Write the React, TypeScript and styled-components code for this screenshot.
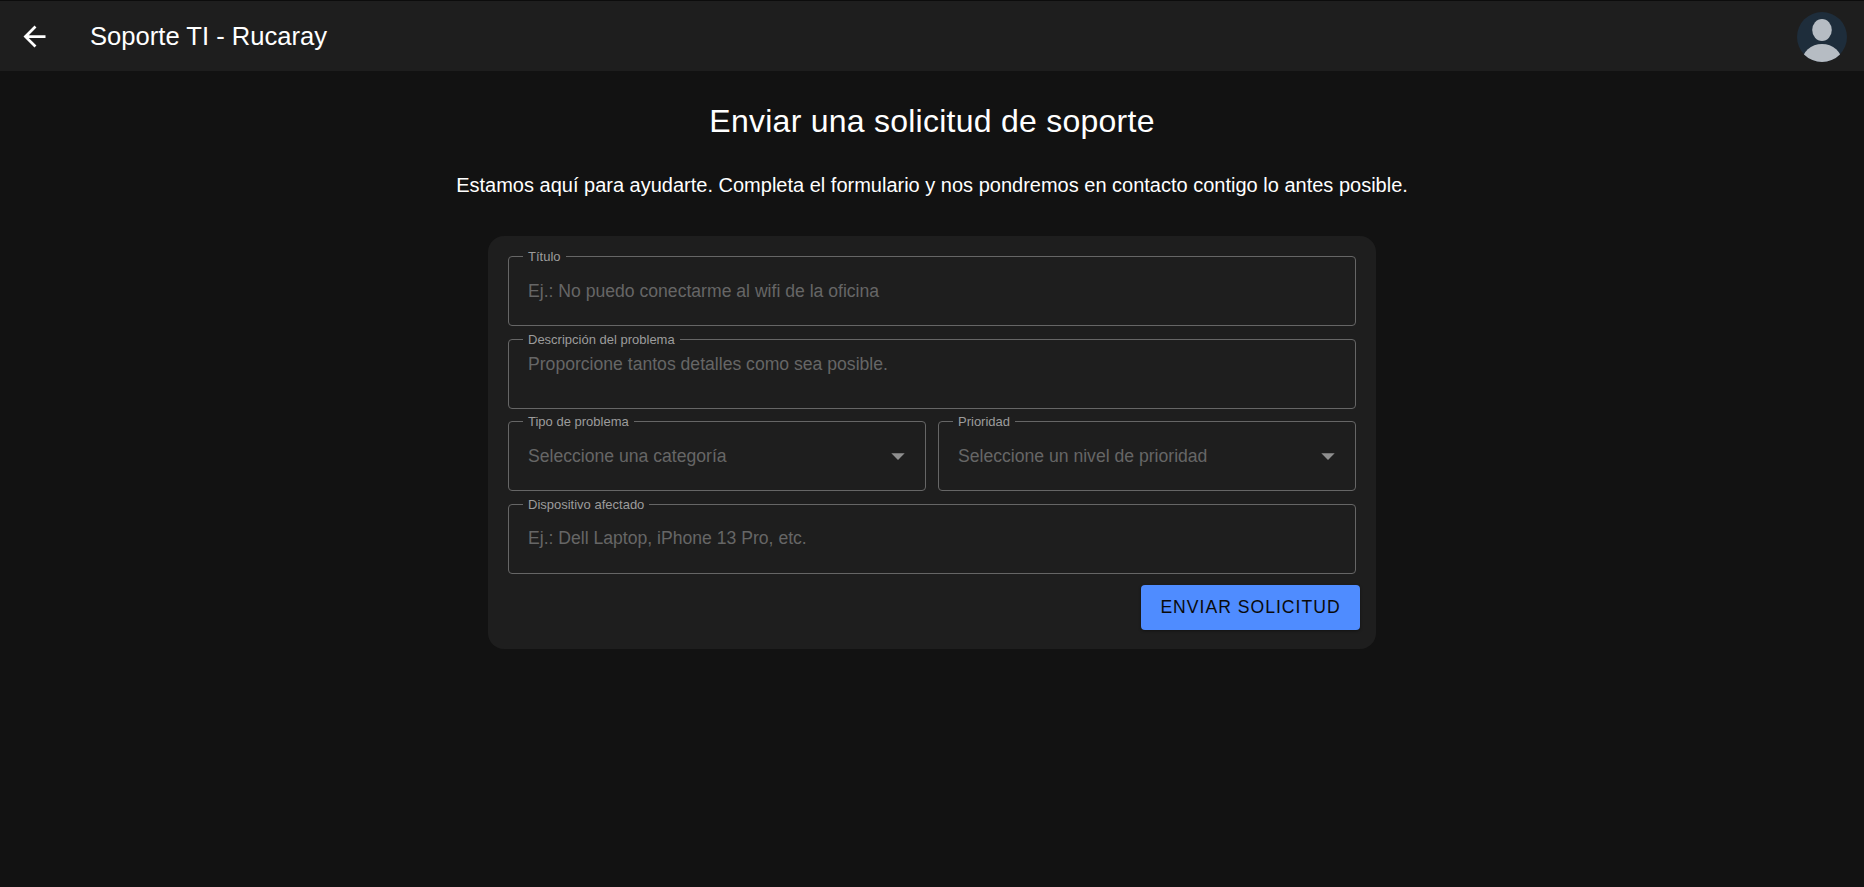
import React from 'react';
import styled, { createGlobalStyle } from 'styled-components';

const GlobalStyle = createGlobalStyle`
  html, body {
    margin: 0;
    padding: 0;
    background: #121212;
    font-family: "Liberation Sans", Arial, sans-serif;
  }
  * { box-sizing: border-box; }
`;

export default function App() {
  return (
    <Page>
      <GlobalStyle />
      <AppBar>
        <BackButton aria-label="Volver">
          <svg width="33" height="33" viewBox="0 0 24 24" fill="currentColor">
            <path d="M20 11H7.83l5.59-5.59L12 4l-8 8 8 8 1.41-1.41L7.83 13H20v-2z" />
          </svg>
        </BackButton>
        <AppTitle>Soporte TI - Rucaray</AppTitle>
        <Avatar>
          <svg width="50" height="50" viewBox="0 0 50 50">
            <ellipse cx="25" cy="18" rx="9.8" ry="11" fill="#b6bcc3" />
            <ellipse cx="25" cy="50" rx="20" ry="18" fill="#b6bcc3" />
          </svg>
        </Avatar>
      </AppBar>
      <Main>
        <Heading>Enviar una solicitud de soporte</Heading>
        <Intro>
          Estamos aquí para ayudarte. Completa el formulario y nos pondremos en
          contacto contigo lo antes posible.
        </Intro>
        <Card>
          <Field label="Título">
            <TextInput placeholder="Ej.: No puedo conectarme al wifi de la oficina" />
          </Field>
          <Field label="Descripción del problema">
            <TextArea placeholder="Proporcione tantos detalles como sea posible." />
          </Field>
          <Row>
            <Field label="Tipo de problema">
              <SelectValue>
                Seleccione una categoría
                <Caret />
              </SelectValue>
            </Field>
            <Field label="Prioridad">
              <SelectValue>
                Seleccione un nivel de prioridad
                <Caret />
              </SelectValue>
            </Field>
          </Row>
          <Field label="Dispositivo afectado">
            <TextInput placeholder="Ej.: Dell Laptop, iPhone 13 Pro, etc." />
          </Field>
          <Actions>
            <SubmitButton type="button">Enviar solicitud</SubmitButton>
          </Actions>
        </Card>
      </Main>
    </Page>
  );
}

function Field({ label, children }: { label: string; children: React.ReactNode }) {
  return (
    <FieldBox>
      <FieldLegend>{label}</FieldLegend>
      {children}
    </FieldBox>
  );
}

function Caret() {
  return (
    <CaretIcon width="32" height="32" viewBox="0 0 24 24" fill="currentColor">
      <path d="M7 10l5 5 5-5z" />
    </CaretIcon>
  );
}

const Page = styled.div`
  min-height: 887px;
  background: #121212;
  color: #fff;
`;

const AppBar = styled.header`
  display: flex;
  align-items: center;
  height: 71px;
  padding: 1px 17px 0 18px;
  background: #1e1e1e;
  border-top: 1px solid #0c0c0c;
`;

const BackButton = styled.button`
  display: flex;
  border: 0;
  padding: 0;
  background: none;
  color: #fff;
`;

const AppTitle = styled.h1`
  margin: 0 0 0 39px;
  font-size: 25.6px;
  font-weight: 400;
  line-height: 1.2;
`;

const Avatar = styled.div`
  width: 50px;
  height: 50px;
  margin-left: auto;
  border-radius: 50%;
  overflow: hidden;
  background: #1e2d3b;
`;

const Main = styled.main`
  display: flex;
  flex-direction: column;
  align-items: center;
`;

const Heading = styled.h2`
  margin: 30px 0 0;
  font-size: 32px;
  font-weight: 400;
  line-height: 40px;
  letter-spacing: 0.25px;
`;

const Intro = styled.p`
  margin: 30px 0 0;
  font-size: 20px;
  line-height: 28px;
`;

const Card = styled.form`
  display: flex;
  flex-direction: column;
  gap: 6.67px;
  width: 888px;
  height: 413px;
  margin-top: 37px;
  padding: 14px 20px 0;
  background: #1e1e1e;
  border-radius: 16px;
`;

const FieldBox = styled.fieldset`
  flex: none;
  min-width: 0;
  height: 76px;
  margin: 0;
  padding: 0 19px;
  border: 1px solid #666;
  border-radius: 4px;
`;

const FieldLegend = styled.legend`
  margin-left: -5px;
  padding: 0 5px;
  font-size: 13px;
  line-height: 13px;
  color: #9c9c9c;
`;

const TextInput = styled.input`
  display: block;
  width: 100%;
  height: 54px;
  padding: 2px 0 0;
  border: 0;
  outline: 0;
  background: none;
  font: inherit;
  font-size: 17.6px;
  color: #fff;

  &::placeholder {
    color: #666;
    opacity: 1;
  }
`;

const TextArea = styled.textarea`
  display: block;
  width: 100%;
  height: 54px;
  padding: 6px 0 0;
  border: 0;
  outline: 0;
  resize: none;
  background: none;
  font: inherit;
  font-size: 17.6px;
  line-height: 24px;
  color: #fff;

  &::placeholder {
    color: #666;
    opacity: 1;
  }
`;

const SelectValue = styled.div`
  display: flex;
  align-items: center;
  justify-content: space-between;
  height: 54px;
  padding-top: 2px;
  font-size: 17.6px;
  color: #666;
`;

const CaretIcon = styled.svg`
  margin-right: -8px;
  color: #8f8f8f;
`;

const Row = styled.div`
  display: grid;
  grid-template-columns: 1fr 1fr;
  gap: 12px;
`;

const Actions = styled.div`
  display: flex;
  justify-content: flex-end;
  margin: 4px -4px 0 0;
`;

const SubmitButton = styled.button`
  width: 219px;
  height: 45px;
  border: 0;
  border-radius: 4px;
  background: #4f8cff;
  color: #0a0a0a;
  font: inherit;
  font-size: 17.6px;
  letter-spacing: 1px;
  text-transform: uppercase;
  box-shadow: 0 1px 3px rgba(0, 0, 0, 0.4);
`;
